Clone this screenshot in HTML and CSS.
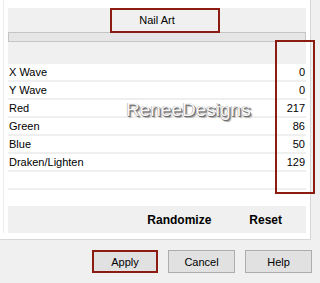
FILE: index.html
```html
<!DOCTYPE html>
<html>
<head>
<meta charset="utf-8">
<link rel="stylesheet" href="styles.css">
</head>
<body>
<div class="dialog">
  <div class="panel">
    <div class="content">
      <div class="header">Nail Art</div>
      <div class="bar"></div>
      <div class="gap"></div>
      <div class="rows">
        <div class="row"><span>X Wave</span><span>0</span></div>
        <div class="row"><span>Y Wave</span><span>0</span></div>
        <div class="row"><span>Red</span><span>217</span></div>
        <div class="row"><span>Green</span><span>86</span></div>
        <div class="row"><span>Blue</span><span>50</span></div>
        <div class="row"><span>Draken/Lighten</span><span>129</span></div>
        <div class="row"><span></span><span></span></div>
      </div>
      <div class="spacer"></div>
      <div class="actions">
        <span class="act">Randomize</span>
        <span class="act">Reset</span>
      </div>
    </div>
    <div class="mark-title"></div>
    <div class="mark-values"></div>
    <div class="watermark">ReneeDesigns</div>
  </div>
  <div class="buttons">
    <button class="btn apply">Apply</button>
    <button class="btn">Cancel</button>
    <button class="btn">Help</button>
  </div>
</div>
</body>
</html>
```
FILE: styles.css
```css
html, body {
  margin: 0;
  padding: 0;
}
body {
  width: 320px;
  height: 283px;
  overflow: hidden;
  background: #f0f0f0;
  font-family: "Liberation Sans", Arial, sans-serif;
  font-size: 11px;
  color: #000;
}
.dialog {
  width: 320px;
  height: 283px;
}
.panel {
  position: relative;
  width: 311px;
  height: 240px;
  box-sizing: border-box;
  background: #fff linear-gradient(#ececec, #ececec) 3px 0 / 1px 233px no-repeat;
  border-right: 1px solid #d7d7d7;
  border-bottom: 1px solid #d7d7d7;
  padding: 8px 4px 0 8px;
}
.content {
  width: 298px;
  display: flex;
  flex-direction: column;
}
.header {
  height: 24px;
  background: #f0f0f0;
  display: flex;
  align-items: center;
  justify-content: center;
}
.bar {
  height: 10px;
  box-sizing: border-box;
  border: 1px solid #c4c4c4;
  background: #e6e6e6;
}
.gap {
  height: 22px;
  background: #f0f0f0;
}
.rows {
  display: flex;
  flex-direction: column;
}
.row {
  height: 16px;
  border-bottom: 2px solid #efefef;
  display: flex;
  justify-content: space-between;
  align-items: center;
  padding: 0 1px 0 1px;
  line-height: 16px;
}
.spacer {
  height: 16px;
}
.actions {
  height: 27px;
  background: #f0f0f0;
  display: flex;
  align-items: center;
  justify-content: flex-end;
  gap: 37px;
  padding-right: 24px;
  font-weight: bold;
  font-size: 12px;
}
.act:first-child {
  margin-right: 1px;
}
.mark-title {
  position: absolute;
  left: 110px;
  top: 8px;
  width: 110px;
  height: 25px;
  box-sizing: border-box;
  border: 2px solid #8c1b12;
}
.mark-values {
  position: absolute;
  left: 275px;
  top: 40px;
  width: 40px;
  height: 154px;
  box-sizing: border-box;
  border: 2px solid #8c1b12;
}
.watermark {
  position: absolute;
  left: 126px;
  top: 99px;
  font-size: 19px;
  color: #f6f6f6;
  text-shadow: 1px 1px 0 #6e6e6e, -0.5px -0.5px 0 #a8a8a8, 0.5px 0.5px 0 #777, 2px 2px 1px #aaa;
}
.buttons {
  display: flex;
  justify-content: flex-end;
  gap: 10px;
  padding: 10px 8px 0 0;
}
.btn {
  width: 67px;
  height: 23px;
  box-sizing: border-box;
  border: 1px solid #adadad;
  background: #e1e1e1;
  font-family: "Liberation Sans", Arial, sans-serif;
  font-size: 11px;
  color: #000;
  padding: 0;
}
.apply {
  width: 66px;
  border: 2px solid #8c1b12;
}
```
